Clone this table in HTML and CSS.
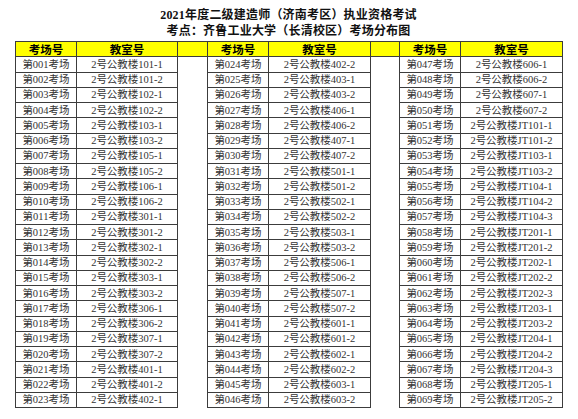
FILE: index.html
```html
<!DOCTYPE html>
<html lang="zh-CN">
<head>
<meta charset="utf-8">
<title>考场分布图</title>
<link rel="stylesheet" href="styles.css">
</head>
<body>
<div class="page">
  <h1 class="title">2021年度二级建造师（济南考区）执业资格考试</h1>
  <h2 class="title">考点：齐鲁工业大学（长清校区）考场分布图</h2>
  <table class="grid">
    <colgroup>
      <col class="c-room"><col class="c-class"><col class="c-gap">
      <col class="c-room"><col class="c-class2"><col class="c-gap2">
      <col class="c-room"><col class="c-class2">
    </colgroup>
    <thead>
      <tr class="head">
        <th>考场号</th><th>教室号</th><th class="gap"></th>
        <th>考场号</th><th>教室号</th><th class="gap"></th>
        <th>考场号</th><th>教室号</th>
      </tr>
    </thead>
    <tbody>
      <tr><td>第001考场</td><td>2号公教楼101-1</td><td class="gap"></td><td>第024考场</td><td>2号公教楼402-2</td><td class="gap"></td><td>第047考场</td><td>2号公教楼606-1</td></tr>
      <tr><td>第002考场</td><td>2号公教楼101-2</td><td class="gap"></td><td>第025考场</td><td>2号公教楼403-1</td><td class="gap"></td><td>第048考场</td><td>2号公教楼606-2</td></tr>
      <tr><td>第003考场</td><td>2号公教楼102-1</td><td class="gap"></td><td>第026考场</td><td>2号公教楼403-2</td><td class="gap"></td><td>第049考场</td><td>2号公教楼607-1</td></tr>
      <tr><td>第004考场</td><td>2号公教楼102-2</td><td class="gap"></td><td>第027考场</td><td>2号公教楼406-1</td><td class="gap"></td><td>第050考场</td><td>2号公教楼607-2</td></tr>
      <tr><td>第005考场</td><td>2号公教楼103-1</td><td class="gap"></td><td>第028考场</td><td>2号公教楼406-2</td><td class="gap"></td><td>第051考场</td><td>2号公教楼JT101-1</td></tr>
      <tr><td>第006考场</td><td>2号公教楼103-2</td><td class="gap"></td><td>第029考场</td><td>2号公教楼407-1</td><td class="gap"></td><td>第052考场</td><td>2号公教楼JT101-2</td></tr>
      <tr><td>第007考场</td><td>2号公教楼105-1</td><td class="gap"></td><td>第030考场</td><td>2号公教楼407-2</td><td class="gap"></td><td>第053考场</td><td>2号公教楼JT103-1</td></tr>
      <tr><td>第008考场</td><td>2号公教楼105-2</td><td class="gap"></td><td>第031考场</td><td>2号公教楼501-1</td><td class="gap"></td><td>第054考场</td><td>2号公教楼JT103-2</td></tr>
      <tr><td>第009考场</td><td>2号公教楼106-1</td><td class="gap"></td><td>第032考场</td><td>2号公教楼501-2</td><td class="gap"></td><td>第055考场</td><td>2号公教楼JT104-1</td></tr>
      <tr><td>第010考场</td><td>2号公教楼106-2</td><td class="gap"></td><td>第033考场</td><td>2号公教楼502-1</td><td class="gap"></td><td>第056考场</td><td>2号公教楼JT104-2</td></tr>
      <tr><td>第011考场</td><td>2号公教楼301-1</td><td class="gap"></td><td>第034考场</td><td>2号公教楼502-2</td><td class="gap"></td><td>第057考场</td><td>2号公教楼JT104-3</td></tr>
      <tr><td>第012考场</td><td>2号公教楼301-2</td><td class="gap"></td><td>第035考场</td><td>2号公教楼503-1</td><td class="gap"></td><td>第058考场</td><td>2号公教楼JT201-1</td></tr>
      <tr><td>第013考场</td><td>2号公教楼302-1</td><td class="gap"></td><td>第036考场</td><td>2号公教楼503-2</td><td class="gap"></td><td>第059考场</td><td>2号公教楼JT201-2</td></tr>
      <tr><td>第014考场</td><td>2号公教楼302-2</td><td class="gap"></td><td>第037考场</td><td>2号公教楼506-1</td><td class="gap"></td><td>第060考场</td><td>2号公教楼JT202-1</td></tr>
      <tr><td>第015考场</td><td>2号公教楼303-1</td><td class="gap"></td><td>第038考场</td><td>2号公教楼506-2</td><td class="gap"></td><td>第061考场</td><td>2号公教楼JT202-2</td></tr>
      <tr><td>第016考场</td><td>2号公教楼303-2</td><td class="gap"></td><td>第039考场</td><td>2号公教楼507-1</td><td class="gap"></td><td>第062考场</td><td>2号公教楼JT202-3</td></tr>
      <tr><td>第017考场</td><td>2号公教楼306-1</td><td class="gap"></td><td>第040考场</td><td>2号公教楼507-2</td><td class="gap"></td><td>第063考场</td><td>2号公教楼JT203-1</td></tr>
      <tr><td>第018考场</td><td>2号公教楼306-2</td><td class="gap"></td><td>第041考场</td><td>2号公教楼601-1</td><td class="gap"></td><td>第064考场</td><td>2号公教楼JT203-2</td></tr>
      <tr><td>第019考场</td><td>2号公教楼307-1</td><td class="gap"></td><td>第042考场</td><td>2号公教楼601-2</td><td class="gap"></td><td>第065考场</td><td>2号公教楼JT204-1</td></tr>
      <tr><td>第020考场</td><td>2号公教楼307-2</td><td class="gap"></td><td>第043考场</td><td>2号公教楼602-1</td><td class="gap"></td><td>第066考场</td><td>2号公教楼JT204-2</td></tr>
      <tr><td>第021考场</td><td>2号公教楼401-1</td><td class="gap"></td><td>第044考场</td><td>2号公教楼602-2</td><td class="gap"></td><td>第067考场</td><td>2号公教楼JT204-3</td></tr>
      <tr><td>第022考场</td><td>2号公教楼401-2</td><td class="gap"></td><td>第045考场</td><td>2号公教楼603-1</td><td class="gap"></td><td>第068考场</td><td>2号公教楼JT205-1</td></tr>
      <tr><td>第023考场</td><td>2号公教楼402-1</td><td class="gap"></td><td>第046考场</td><td>2号公教楼603-2</td><td class="gap"></td><td>第069考场</td><td>2号公教楼JT205-2</td></tr>
    </tbody>
  </table>
</div>
</body>
</html>
```

FILE: styles.css
```css
html, body {
  margin: 0;
  padding: 0;
  background: #ffffff;
}

.page {
  padding: 7px 0 0 15px;
  width: 547px;
}

.title {
  margin: 0;
  font-family: "Liberation Serif", "Noto Sans CJK SC", serif;
  font-weight: bold;
  font-size: 12px;
  line-height: 16px;
  letter-spacing: 0.2px;
  text-align: center;
  color: #111111;
}

.grid {
  margin-top: 2px;
  border-collapse: collapse;
  table-layout: fixed;
  width: 547px;
}

.c-room { width: 61px; }
.c-class { width: 101px; }
.c-class2 { width: 102px; }
.c-gap { width: 30px; }
.c-gap2 { width: 29px; }

.grid tr {
  height: 15.25px;
}

.grid th,
.grid td {
  padding: 0;
  border: 1px solid #3c3c3c;
  text-align: center;
  white-space: nowrap;
  overflow: hidden;
  line-height: 13px;
  font-family: "Liberation Serif", "Noto Sans CJK SC", serif;
}

.grid th {
  background: #ffff00;
  font-family: "Noto Sans CJK SC", sans-serif;
  font-weight: bold;
  font-size: 11.5px;
  color: #000000;
}

.grid td {
  font-size: 10.5px;
  color: #333333;
}

.grid td.gap {
  border-top: none;
  border-bottom: none;
}
```
